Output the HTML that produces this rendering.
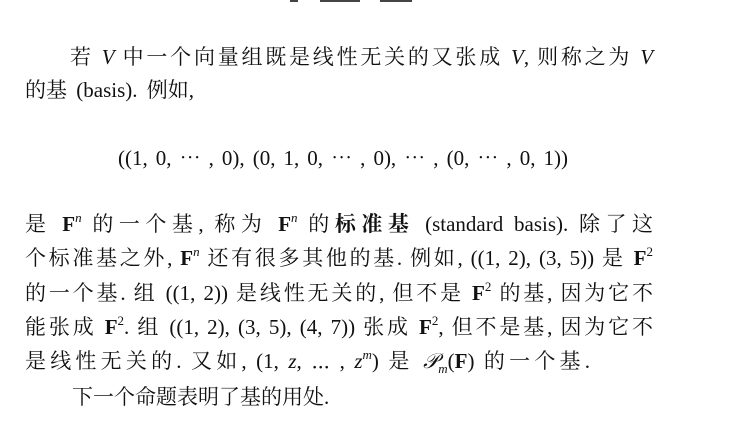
<!DOCTYPE html>
<html><head><meta charset="utf-8"><style>
body{margin:0;width:730px;height:428px;background:#fff;overflow:hidden;position:relative;
font-family:"Liberation Serif","Noto Serif CJK SC","Noto Sans CJK SC",serif;color:#111;font-size:21px}
.l{position:absolute;white-space:nowrap;line-height:24px}
.j{text-align:justify;text-align-last:justify;white-space:normal}
i{font-style:italic}
b.F{font-weight:bold}
sup{font-size:13px;vertical-align:9px;line-height:0}
.top{position:absolute;top:0;height:2px;background:#444}
</style></head><body>
<div class="top" style="left:290px;width:8px"></div>
<div class="top" style="left:320px;width:40px"></div>
<div class="top" style="left:380px;width:32px"></div>
<div class="l j" style="left:70px;top:45px;width:583px">若 <i>V</i> 中一个向量组既是线性无关的又张成 <i>V</i>, 则称之为 <i>V</i></div>
<div class="l" style="left:25px;top:78px;word-spacing:4px">的基 (basis). 例如,</div>
<div class="l j" style="left:118px;top:146px;width:450px">((1, 0, ⋯ , 0), (0, 1, 0, ⋯ , 0), ⋯ , (0, ⋯ , 0, 1))</div>
<div class="l j" style="left:25px;top:212px;width:628px">是 <b class="F">F</b><sup><i>n</i></sup> 的一个基, 称为 <b class="F">F</b><sup><i>n</i></sup> 的<b>标准基</b> (standard basis). 除了这</div>
<div class="l j" style="left:25px;top:246px;width:628px">个标准基之外, <b class="F">F</b><sup><i>n</i></sup> 还有很多其他的基. 例如, ((1, 2), (3, 5)) 是 <b class="F">F</b><sup>2</sup></div>
<div class="l j" style="left:25px;top:281px;width:628px">的一个基. 组 ((1, 2)) 是线性无关的, 但不是 <b class="F">F</b><sup>2</sup> 的基, 因为它不</div>
<div class="l j" style="left:25px;top:315px;width:628px">能张成 <b class="F">F</b><sup>2</sup>. 组 ((1, 2), (3, 5), (4, 7)) 张成 <b class="F">F</b><sup>2</sup>, 但不是基, 因为它不</div>
<div class="l j" style="left:25px;top:349px;width:565px">是线性无关的. 又如, (1, <i>z</i>, ⋯ , <i>z</i><sup><i>m</i></sup>) 是 <i>𝒫</i><sub style="font-size:13px"><i>m</i></sub>(<b class="F">F</b>) 的一个基.</div>
<div class="l" style="left:72px;top:385px">下一个命题表明了基的用处.</div>
</body></html>
